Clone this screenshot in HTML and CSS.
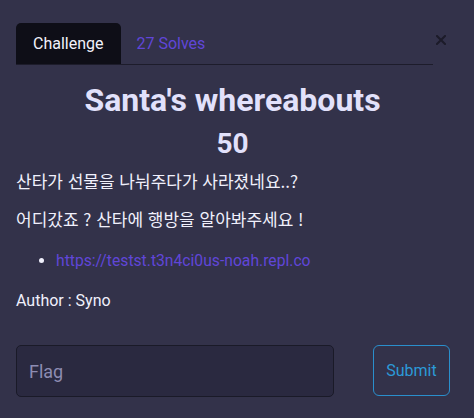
FILE: index.html
```html
<!DOCTYPE html>
<html lang="ko">
<head>
<meta charset="utf-8">
<link rel="stylesheet" href="styles.css">
</head>
<body>
<div class="modal">
  <div class="tabs-row">
    <ul class="tabs">
      <li class="tab active">Challenge</li>
      <li class="tab solves">27 Solves</li>
    </ul>
    <button class="close" aria-label="Close">
      <svg width="10" height="10" viewBox="0 0 10 10"><path d="M1 1L9 9M9 1L1 9" stroke="currentColor" stroke-width="2" stroke-linecap="square"/></svg>
    </button>
  </div>
  <h2 class="title">Santa's whereabouts</h2>
  <h3 class="points">50</h3>
  <div class="desc">
    <p class="ko">산타가 선물을 나눠주다가 사라졌네요..?</p>
    <p class="ko">어디갔죠 ? 산타에 행방을 알아봐주세요 !</p>
    <ul class="links">
      <li><a href="#">https://testst.t3n4ci0us-noah.repl.co</a></li>
    </ul>
    <p class="author">Author : Syno</p>
  </div>
  <form class="flag-form">
    <input class="flag-input" type="text" placeholder="Flag">
    <button class="submit" type="button">Submit</button>
  </form>
</div>
</body>
</html>
```

FILE: styles.css
```css
html, body {
  margin: 0;
  padding: 0;
  background: #33324a;
}
body {
  font-family: Roboto, "Noto Sans CJK KR", sans-serif;
  font-size: 16px;
  line-height: 24px;
  color: #f0f0fc;
  width: 474px;
  height: 418px;
  overflow: hidden;
}
.modal {
  padding: 23px 16px 0 16px;
}
.tabs-row {
  display: flex;
  align-items: flex-start;
}
.tabs {
  list-style: none;
  margin: 0;
  padding: 0;
  display: flex;
  width: 417px;
  flex: none;
  border-bottom: 1px solid #1d1c2b;
  height: 41px;
}
.tab {
  padding: 0 17px 0 17px;
  line-height: 41px;
  border-radius: 5px 5px 0 0;
}
.tab.active {
  background: #0e0e17;
  color: #f2f2fc;
}
.tab.solves {
  padding-left: 16px;
  color: #6046d8;
}
.close {
  flex: none;
  margin: 12px 0 0 3px;
  padding: 0;
  border: 0;
  background: none;
  color: #1c1b29;
  width: 10px;
  height: 10px;
  display: flex;
}
.title {
  margin: 16px 0 0 0;
  padding-right: 9px;
  text-align: center;
  font-size: 32px;
  font-weight: 700;
  line-height: 38px;
  color: #e2e1fb;
}
.points {
  margin: 8px 0 0 0;
  padding-right: 9px;
  text-align: center;
  font-size: 28px;
  font-weight: 700;
  line-height: 34px;
  color: #e2e1fb;
}
.desc p {
  margin: 0 0 16px 0;
}
.desc .ko {
  font-family: "Noto Sans CJK KR", Roboto, sans-serif;
  font-size: 17px;
  line-height: 22px;
}
.desc .ko:first-child {
  margin-top: 9px;
}
.links {
  margin: 19px 0 16px 0;
  padding-left: 40px;
}
.links li::marker {
  color: #f0f0fc;
}
.links a {
  color: #6046d8;
  text-decoration: none;
  font-size: 15.7px;
}
.flag-form {
  display: flex;
  align-items: flex-start;
  margin-top: 32px;
}
.flag-input {
  box-sizing: border-box;
  flex: none;
  width: 318px;
  height: 52px;
  background: #2a2940;
  border: 1px solid #1a1a28;
  border-radius: 5px;
  padding: 0 12px;
  font-family: inherit;
  font-size: 18px;
  color: #f0f0fc;
  outline: none;
}
.flag-input::placeholder {
  color: #8d8cb2;
}
.submit {
  box-sizing: border-box;
  flex: none;
  margin-left: 39px;
  width: 77px;
  height: 51px;
  padding: 0;
  background: none;
  border: 1px solid #2a8fcc;
  border-radius: 6px;
  color: #2c9ad8;
  font-family: inherit;
  font-size: 16px;
}
```
